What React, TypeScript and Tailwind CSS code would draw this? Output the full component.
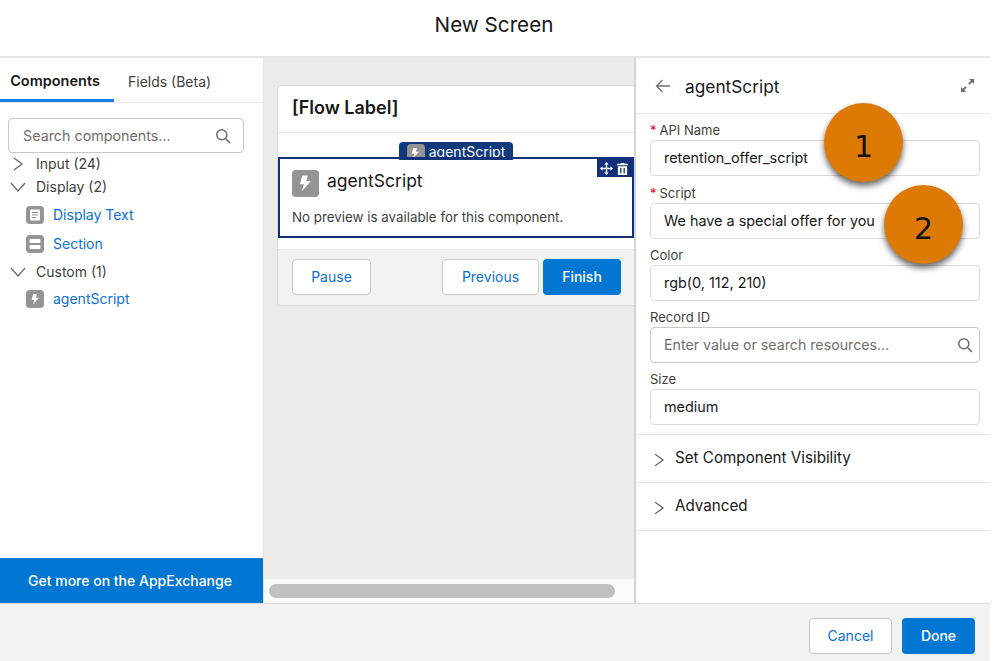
const font = "font-['Inter','Liberation_Sans',sans-serif]";

function Bolt({ className }: { className: string }) {
  return (
    <span className={`flex items-center justify-center rounded-[4px] bg-[#969492] ${className}`}>
      <svg viewBox="0 0 24 24" className="h-[70%] w-[70%]" fill="#fff">
        <path d="M15 2H8L5 13h5l-2.500 9L19 9h-6z" />
      </svg>
    </span>
  );
}

function Chevron({ dir }: { dir: "right" | "down" }) {
  return (
    <svg viewBox="0 0 16 16" className="h-4 w-4 shrink-0" fill="none" stroke="#706e6b" strokeWidth="1.4">
      {dir === "right" ? <path d="M4 2l8 6-8 6" /> : <path d="M1 4l7 8 7-8" />}
    </svg>
  );
}

function SearchIcon() {
  return (
    <svg viewBox="0 0 16 16" className="h-4 w-4" fill="none" stroke="#706e6b" strokeWidth="1.5">
      <circle cx="6.8" cy="6.8" r="5" />
      <path d="M10.6 10.6L15 15" />
    </svg>
  );
}

function Field({ label, required, value, mt }: { label: string; required?: boolean; value: string; mt: string }) {
  return (
    <div className={mt}>
      <div className="h-[18px] text-[13px] leading-[16px] text-[#3e3e3c]">
        {required && <span className="mr-[3px] text-[#ea001e]">*</span>}
        {label}
      </div>
      <div className="flex h-9 items-center rounded-[4px] border border-[#dddbda] bg-white px-[13px] text-[14.4px] text-[#181818]">
        {value}
      </div>
    </div>
  );
}

function Accordion({ label }: { label: string }) {
  return (
    <div className="flex h-12 items-center gap-2 border-b border-[#e5e5e5] pl-[15px] text-[15.2px] text-[#181818]">
      <span className="translate-y-[1px]">
        <Chevron dir="right" />
      </span>
      {label}
    </div>
  );
}

function Marker({ n, className }: { n: string; className: string }) {
  return (
    <div
      className={`absolute flex h-[79px] w-[79px] items-center justify-center rounded-full bg-[#dd7a06] pt-[7px] font-['DejaVu_Sans',sans-serif] text-[30px] text-[#111] shadow-[0_4px_6px_rgba(0,0,0,0.6)] ${className}`}
    >
      {n}
    </div>
  );
}

function SideItem({ label, icon }: { label: string; icon: React.ReactNode }) {
  return (
    <div className="flex items-center gap-[9px] pl-[26px] text-sm text-[#0b6fd6]">
      {icon}
      {label}
    </div>
  );
}

export default function App() {
  return (
    <div className="h-[661px] w-[1000px] overflow-hidden bg-white">
      <div className={`relative flex h-full w-[990px] flex-col overflow-hidden bg-white ${font}`}>
        <header className="flex h-[58px] shrink-0 items-center justify-center border-b-2 border-[#e5e5e5] pb-[6px] pr-[2px] text-[20.7px] text-[#181818]">
          New Screen
        </header>

        <div className="flex min-h-0 flex-1">
          {/* left palette */}
          <aside className="flex w-[264px] shrink-0 flex-col border-r border-[#e5e5e5]">
            <div className="flex h-[45px] shrink-0 border-b border-[#e5e5e5] text-sm">
              <div className="flex w-[114px] items-center justify-center border-b-[3px] border-[#1b7fe0] pr-[4px] pt-[5px] text-[14.5px] font-semibold text-[#181818]">
                Components
              </div>
              <div className="flex items-center pl-[14px] pt-[3px] text-[#3e3e3c]">Fields (Beta)</div>
            </div>
            <div className="ml-2 mr-[19px] mt-[15px] flex h-[35px] shrink-0 items-center justify-between rounded-[4px] border border-[#c9c7c5] pl-[14px] pr-[12px] text-[14.3px] text-[#706e6b]">
              Search components...
              <SearchIcon />
            </div>
            <div className="flex min-h-0 flex-1 flex-col text-sm text-[#3e3e3c]">
              <div className="mt-[1px] flex h-5 items-center gap-[10px] pl-[10px]">
                <Chevron dir="right" />
                Input (24)
              </div>
              <div className="mt-[3px] flex h-5 items-center gap-[10px] pl-[10px]">
                <Chevron dir="down" />
                Display (2)
              </div>
              <div className="mt-2 h-5">
                <SideItem
                  label="Display Text"
                  icon={
                    <span className="flex h-[18px] w-[18px] items-center justify-center rounded-[4px] bg-[#969492]">
                      <svg viewBox="0 0 18 18" className="h-[18px] w-[18px]">
                        <rect x="4" y="3.5" width="10" height="11" rx="1" fill="#fff" />
                        <path d="M6 6.5h6M6 9h6M6 11.5h4" stroke="#969492" strokeWidth="1" />
                      </svg>
                    </span>
                  }
                />
              </div>
              <div className="mt-[9px] h-5">
                <SideItem
                  label="Section"
                  icon={
                    <span className="flex h-[18px] w-[18px] items-center justify-center rounded-[4px] bg-[#969492]">
                      <svg viewBox="0 0 18 18" className="h-[18px] w-[18px]">
                        <rect x="3.5" y="4" width="11" height="4" rx="1" fill="#fff" />
                        <rect x="3.5" y="10" width="11" height="4" rx="1" fill="#fff" />
                        <path d="M3 9h12" stroke="#969492" strokeWidth="0.6" />
                      </svg>
                    </span>
                  }
                />
              </div>
              <div className="mt-2 flex h-5 items-center gap-[10px] pl-[10px]">
                <Chevron dir="down" />
                Custom (1)
              </div>
              <div className="mt-[7px] h-5">
                <SideItem label="agentScript" icon={<Bolt className="h-[18px] w-[18px]" />} />
              </div>
            </div>
            <div className="flex h-[45px] shrink-0 items-center justify-center border-t border-[#1b7fe0] bg-[#0176d3] pr-[3px] text-sm font-medium text-white">
              Get more on the AppExchange
            </div>
          </aside>

          {/* canvas */}
          <main className="flex min-w-0 flex-1 flex-col bg-[#ecebea]">
            <div className="min-h-0 flex-1 pl-[13px] pt-[27px]">
              <div className="overflow-hidden rounded-l-[4px] border border-r-0 border-[#dddbda] bg-white">
                <div className="flex h-[47px] items-center border-b border-[#e5e5e5] pb-[4px] pl-[14px] text-[18px] font-semibold text-[#181818]">
                  [Flow Label]
                </div>
                <div className="relative pt-[24px]">
                  <div className="absolute left-[121px] top-[9px] flex h-[18px] w-[114px] items-start justify-center gap-[4px] overflow-hidden rounded-t-[4px] border-b-[3px] border-[#103a7c] bg-[#103a7c] pt-[2px] text-sm leading-[16px] text-white">
                    <Bolt className="h-[18px] w-[18px] shrink-0" />
                    agentScript
                  </div>
                  <div className="relative h-[81px] border-2 border-[#12307a] pl-3">
                    <div className="absolute right-0 top-0 flex h-[18px] w-[35px] items-center justify-center gap-[3px] bg-[#12307a]">
                      <svg viewBox="0 0 14 14" className="h-[13px] w-[13px]" fill="#fff">
                        <path d="M7 0l2.4 2.7H7.800v3.500h3.500V4.600L14 7l-2.700 2.400V7.800H7.800v3.500h1.600L7 14l-2.400-2.700h1.600V7.800H2.700v1.600L0 7l2.700-2.400v1.600h3.500V2.700H4.600z" />
                      </svg>
                      <svg viewBox="0 0 14 14" className="h-[13px] w-[13px]" fill="#fff">
                        <path
                          fillRule="evenodd"
                          d="M5 1h4v1h4v1.500H1V2h4zM2 4.500h10V14H2zM4.500 6.500v5.500h1.400V6.500zm3.600 0v5.500h1.400V6.500z"
                        />
                      </svg>
                    </div>
                    <div className="flex items-center gap-2 pt-[9px]">
                      <Bolt className="h-[27px] w-[27px]" />
                      <span className="mb-[4px] text-[17.5px] text-[#181818]">agentScript</span>
                    </div>
                    <div className="mt-[10px] text-[13.35px] leading-[18px] text-[#3e3e3c]">
                      No preview is available for this component.
                    </div>
                  </div>
                </div>
                <div className="mt-[11px] flex h-[56px] items-center border-t border-[#e5e5e5] bg-[#f3f2f2] pb-[2px] pl-[14px] pr-[13px] text-sm">
                  <button className="h-9 w-[79px] rounded-[4px] border border-[#c9c7c5] bg-white text-[#0b6fd6]">Pause</button>
                  <button className="ml-auto h-9 w-[97px] rounded-[4px] border border-[#c9c7c5] bg-white text-[#0b6fd6]">Previous</button>
                  <button className="ml-[4px] h-9 w-[78px] rounded-[4px] bg-[#0176d3] font-medium text-white">Finish</button>
                </div>
              </div>
            </div>
            <div className="flex h-6 shrink-0 items-center bg-[#fafaf9] pl-[5px] pr-[19px]">
              <div className="h-[14px] w-full rounded-full bg-[#c0c0c0]" />
            </div>
          </main>

          {/* properties panel */}
          <section className="relative w-[356px] shrink-0 border-l-2 border-[#d6d4d2] bg-white">
            <div className="flex h-[56px] items-center border-b border-[#e5e5e5] pl-[19px] pr-[15px]">
              <svg viewBox="0 0 16 16" className="h-4 w-4" fill="none" stroke="#706e6b" strokeWidth="1.3">
                <path d="M15 8H1.500M7.500 2L1.500 8l6 6" />
              </svg>
              <span className="ml-[14px] pt-[2px] text-[17.3px] text-[#181818]">agentScript</span>
              <svg viewBox="0 0 16 16" className="ml-auto h-[15px] w-[15px]" fill="#706e6b">
                <path d="M9.500 1H15v5.500l-2-2-2.800 2.800-1.500-1.500L11.500 3zM6.500 15H1V9.500l2 2 2.800-2.800 1.500 1.500L4.500 13z" />
              </svg>
            </div>
            <div className="border-b border-[#e5e5e5] pb-[9px] pl-[14px] pr-[10px]">
              <Field mt="mt-[8px]" required label="API Name" value="retention_offer_script" />
              <Field mt="mt-[9px]" required label="Script" value="We have a special offer for you" />
              <Field mt="mt-[8px]" label="Color" value="rgb(0, 112, 210)" />
              <div className="mt-[8px]">
                <div className="h-[18px] text-[13px] leading-[16px] text-[#3e3e3c]">Record ID</div>
                <div className="flex h-9 items-center justify-between rounded-[4px] border border-[#c9c7c5] pl-[13px] pr-[6px] text-[14.2px] text-[#706e6b]">
                  Enter value or search resources...
                  <SearchIcon />
                </div>
              </div>
              <Field mt="mt-[8px]" label="Size" value="medium" />
            </div>
            <Accordion label="Set Component Visibility" />
            <Accordion label="Advanced" />
          </section>
        </div>

        <footer className="flex h-[58px] shrink-0 items-center justify-end gap-[10px] border-t border-[#dddbda] bg-[#f3f2f2] pr-[15px] pt-[7px] text-sm">
          <button className="h-9 w-[83px] rounded-[4px] border border-[#c9c7c5] bg-white text-[#0b6fd6]">Cancel</button>
          <button className="h-9 w-[73px] rounded-[4px] bg-[#0176d3] font-medium text-white">Done</button>
        </footer>

        <Marker n="1" className="left-[824px] top-[103px]" />
        <Marker n="2" className="left-[884px] top-[185px]" />
      </div>
    </div>
  );
}
